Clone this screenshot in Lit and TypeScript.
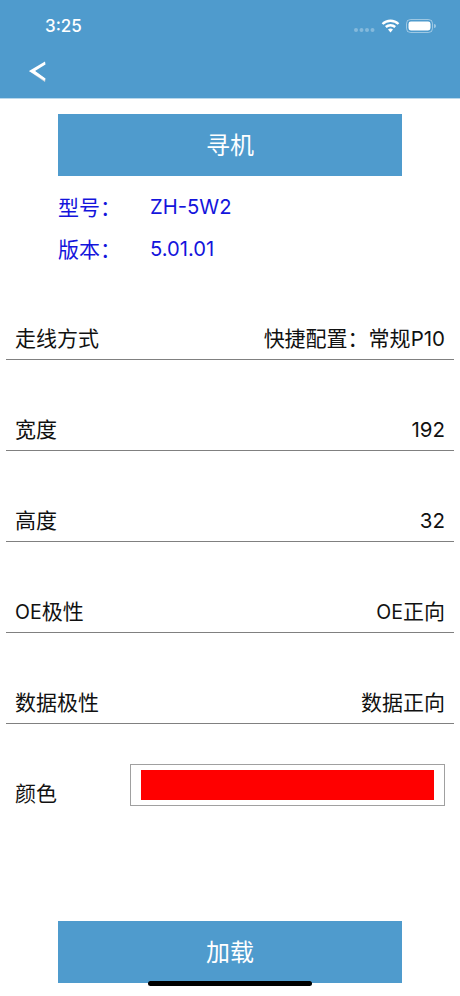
import { LitElement, html, css, svg } from "lit";
import { customElement } from "lit/decorators.js";

const latin = (t: string, cls = "latin") => html`<span class=${cls}>${t}</span>`;

const rows = [
  [html`走线方式`, html`快捷配置：常规${latin("P10")}`],
  [html`宽度`, latin("192")],
  [html`高度`, latin("32")],
  [html`${latin("OE", "caps")}极性`, html`${latin("OE", "caps")}正向`],
  [html`数据极性`, html`数据正向`],
];

@customElement("app-root")
export class AppRoot extends LitElement {
  static styles = css`
    :host {
      display: block;
      width: 460px;
      height: 996px;
      background: #fff;
      position: relative;
      overflow: hidden;
      font-family: "Inter", "Noto Sans CJK SC", sans-serif;
      color: #111;
    }
    .header {
      height: 99px;
      background: #4f9bcd;
      box-sizing: border-box;
      border-bottom: 1px solid #b9d8ec;
      display: flex;
      flex-direction: column;
    }
    .status {
      height: 52px;
      display: flex;
      align-items: center;
      justify-content: space-between;
      padding: 0 24px 0 45px;
      color: #fff;
      font-size: 17px;
      font-weight: 500;
    }
    .status-icons {
      display: flex;
      align-items: center;
      gap: 6px;
    }
    .nav {
      height: 38px;
      display: flex;
      align-items: center;
      padding-left: 28px;
    }
    .action {
      width: 344px;
      height: 62px;
      margin: 0 auto;
      padding-bottom: 3px;
      box-sizing: border-box;
      background: #4f9bcd;
      color: #fff;
      font-size: 24px;
      display: flex;
      align-items: center;
      justify-content: center;
    }
    .top-action {
      margin-top: 15px;
    }
    .info {
      margin: 9px 0 0 58px;
      display: grid;
      grid-template-columns: 92px auto;
      grid-auto-rows: 42px;
      align-items: center;
      justify-content: start;
      color: #1414dc;
      font-size: 21px;
    }
    .info-value {
      font-size: 20.2px;
    }
    .rows {
      margin-top: 28px;
      padding: 0 6px;
    }
    .row {
      height: 91px;
      box-sizing: border-box;
      border-bottom: 1px solid #808080;
      padding: 0 9px 5px;
      display: flex;
      align-items: flex-end;
      justify-content: space-between;
      font-size: 21px;
      line-height: 30px;
    }
    .row:first-child {
      height: 63px;
    }
    .latin {
      font-size: 20.5px;
    }
    .caps {
      font-size: 19.5px;
    }
    .color-row {
      height: 100px;
      padding: 0 15px;
      display: flex;
      justify-content: space-between;
      font-size: 21px;
      margin-top: 40px;
    }
    .color-label {
      margin-top: 15px;
      line-height: 30px;
    }
    .swatch {
      width: 315px;
      height: 42px;
      box-sizing: border-box;
      border: 1px solid #a0a0a0;
      padding: 5px 10px;
    }
    .swatch-fill {
      height: 100%;
      background: #ff0000;
    }
    .bottom-action {
      margin-top: 57px;
    }
    .home {
      position: absolute;
      left: 148px;
      top: 981px;
      width: 164px;
      height: 5px;
      border-radius: 3px;
      background: #000;
    }
  `;

  render() {
    return html`
      <div class="header">
        <div class="status">
          <span>3:25</span>
          <div class="status-icons">
            <svg width="21" height="14" viewBox="0 0 21 14">
              ${[2, 7.5, 13, 18.5].map(
                (x) => svg`<circle cx=${x} cy="11" r="2" fill="#fff" opacity="0.3"></circle>`
              )}
            </svg>
            <svg width="19" height="14" viewBox="0 0 19 14">
              <path d="M1.5 5 A11.5 11.5 0 0 1 17.5 5" fill="none" stroke="#fff" stroke-width="2.4"></path>
              <path d="M4.8 8 A7 7 0 0 1 14.2 8" fill="none" stroke="#fff" stroke-width="2.4"></path>
              <path d="M7 10.6 A3.6 3.6 0 0 1 12 10.6 L9.5 13.4 Z" fill="#fff"></path>
            </svg>
            <svg width="30" height="14" viewBox="0 0 30 14">
              <rect x="0.5" y="0.5" width="26" height="13" rx="4" fill="none" stroke="#fff" stroke-opacity="0.45"></rect>
              <rect x="2.5" y="2.5" width="22" height="9" rx="2.4" fill="#fff"></rect>
              <path d="M28 5 a2 2 0 0 1 0 4 z" fill="#fff" opacity="0.45"></path>
            </svg>
          </div>
        </div>
        <div class="nav">
          <svg width="20" height="24" viewBox="0 0 20 24">
            <path d="M1 12 L7 12 L17.5 20 L17 23 Z" fill="#cfd8de"></path>
            <path d="M1 12 L17 2.5 L17.5 5.5 L7 12 L17.5 19.5 L16.5 21.5 Z" fill="#fff"></path>
          </svg>
        </div>
      </div>
      <div class="action top-action">寻机</div>
      <div class="info">
        <span>型号：</span><span class="info-value">ZH-5W2</span>
        <span>版本：</span><span class="info-value">5.01.01</span>
      </div>
      <div class="rows">
        ${rows.map(
          ([label, value]) => html`<div class="row"><span>${label}</span><span>${value}</span></div>`
        )}
      </div>
      <div class="color-row">
        <span class="color-label">颜色</span>
        <div class="swatch"><div class="swatch-fill"></div></div>
      </div>
      <div class="action bottom-action">加载</div>
      <div class="home"></div>
    `;
  }
}
